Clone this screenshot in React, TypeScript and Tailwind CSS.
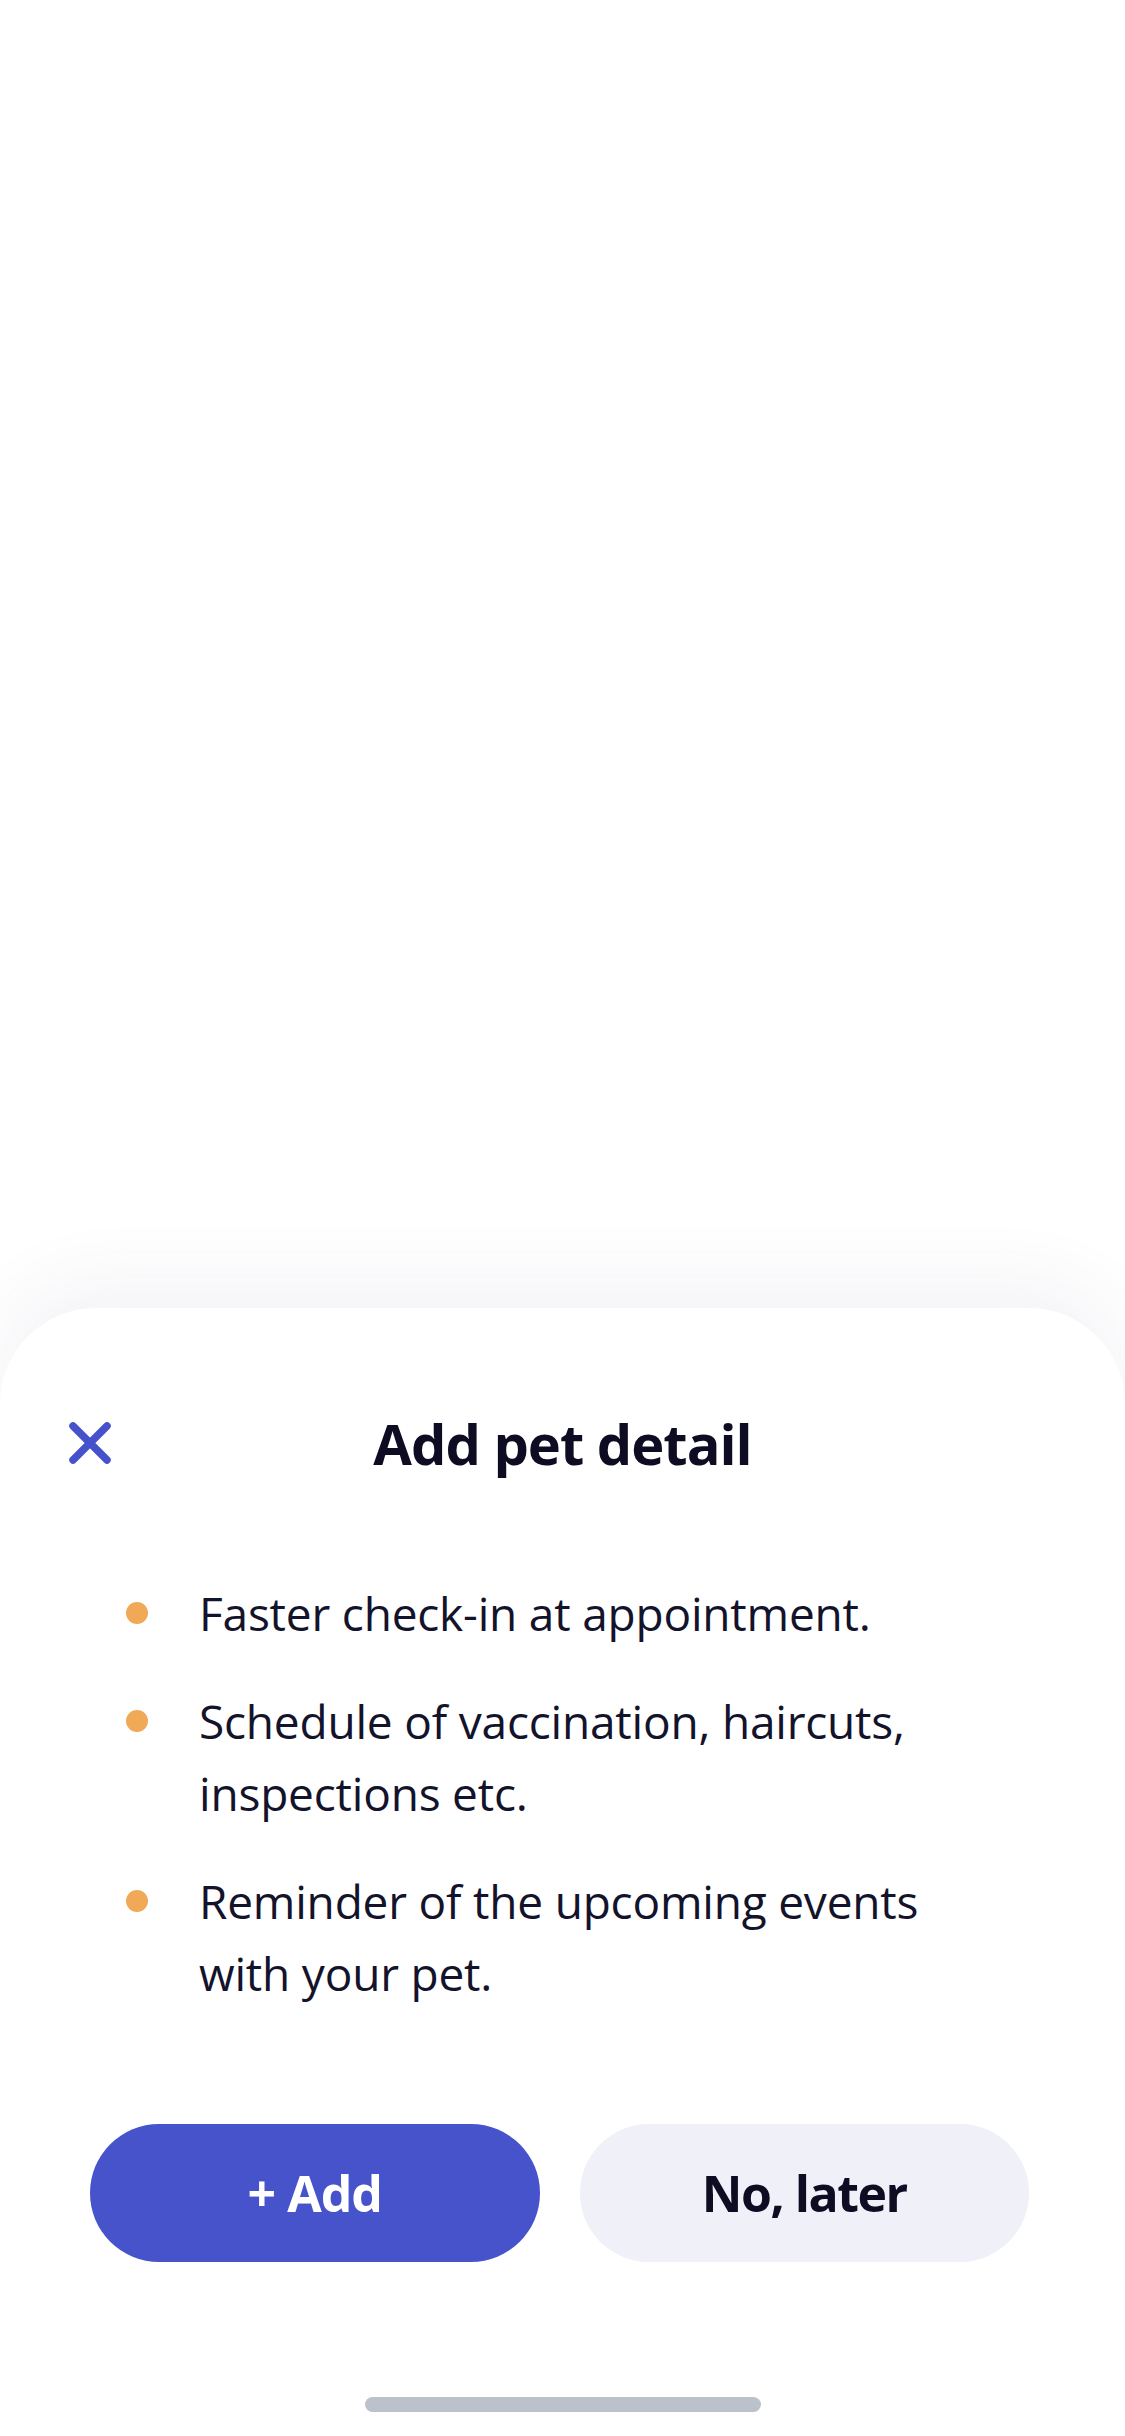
import React from "react";

const benefits = [
  "Faster check-in at appointment.",
  "Schedule of vaccination, haircuts, inspections etc.",
  "Reminder of the upcoming events with your pet.",
];

const CloseIcon = () => (
  <svg width="44" height="42" viewBox="0 0 44 42" fill="none">
    <path d="M5 4 L39 38 M39 4 L5 38" stroke="#4652CB" strokeWidth="7.5" strokeLinecap="round" />
  </svg>
);

const App = () => {
  return (
    <div
      className="flex flex-col h-[2436px] w-[1125px] bg-white overflow-hidden"
      style={{ fontFamily: '"Open Sans", "Noto Sans", sans-serif' }}
    >
      <div className="flex-1 bg-white" />
      <div className="relative h-[1128px] bg-white rounded-t-[96px] shadow-[0_-30px_70px_rgba(60,60,120,0.06)] flex flex-col">
        <div className="mt-[99px] grid grid-cols-[1fr_auto_1fr] items-center h-[72px]">
          <div className="pl-[68px] flex items-center">
            <CloseIcon />
          </div>
          <h1 className="text-[56px] leading-[72px] font-bold text-[#0D0C22] tracking-[-1px]">
            Add pet detail
          </h1>
          <div />
        </div>

        <ul className="mt-[98px] flex flex-col gap-[36px] pl-[126px] pr-[160px]">
          {benefits.map((item) => (
            <li key={item} className="flex items-start">
              <span className="mt-[25px] w-[22px] h-[22px] rounded-full bg-[#F0A957] shrink-0" />
              <span className="ml-[51px] text-[46px] leading-[72px] text-[#13132B] tracking-[-0.2px]">
                {item}
              </span>
            </li>
          ))}
        </ul>

        <div className="mt-[115px] flex gap-[40px] pl-[90px] pr-[96px]">
          <button className="flex-1 h-[138px] rounded-full bg-[#4653CB] text-white text-[50px] font-bold tracking-[-1px]">
            + Add
          </button>
          <button className="flex-1 h-[138px] rounded-full bg-[#EFF0F8] text-[#0D0C22] text-[50px] font-bold tracking-[-1.5px]">
            No, later
          </button>
        </div>

        <div className="mt-auto mb-[24px] flex justify-center">
          <div className="w-[396px] h-[15px] rounded-full bg-[#BCC2CC]" />
        </div>
      </div>
    </div>
  );
};

export default App;
